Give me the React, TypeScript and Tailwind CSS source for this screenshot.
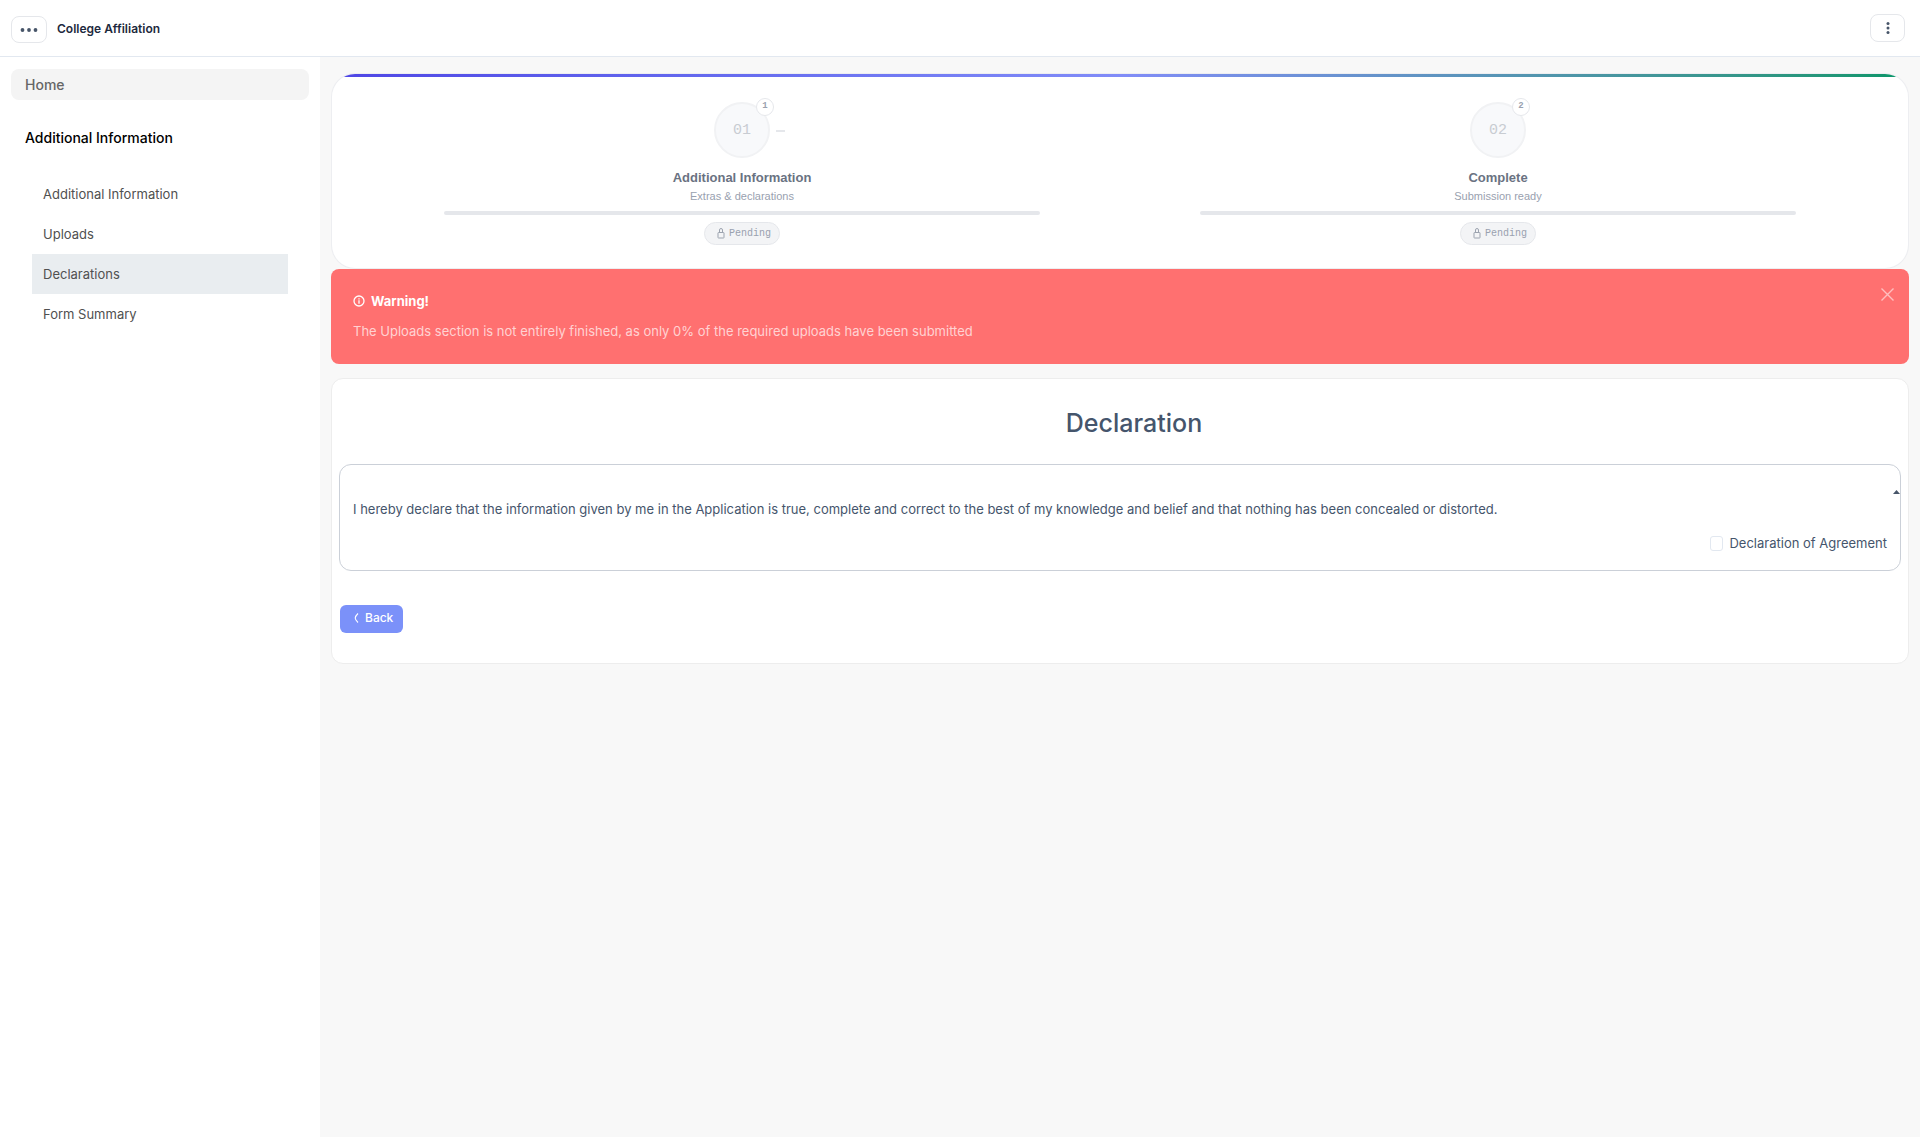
import type { ReactNode } from "react";

const navItems = [
  { label: "Additional Information", active: false },
  { label: "Uploads", active: false },
  { label: "Declarations", active: true },
  { label: "Form Summary", active: false },
];

const steps = [
  { number: 1, title: "Additional Information", subtitle: "Extras & declarations", status: "Pending" },
  { number: 2, title: "Complete", subtitle: "Submission ready", status: "Pending" },
];

function Header() {
  return (
    <header className="flex h-[57px] shrink-0 items-center border-b border-slate-200 bg-white pl-[11px] pr-[15px]">
      <button
        type="button"
        aria-label="Toggle menu"
        className="mt-[3px] flex h-[27px] w-9 items-center justify-center rounded-lg border border-gray-200"
      >
        <svg width="18" height="4" viewBox="0 0 18 4" fill="#475569">
          <circle cx="2.5" cy="2" r="1.9" />
          <circle cx="9" cy="2" r="1.9" />
          <circle cx="15.5" cy="2" r="1.9" />
        </svg>
      </button>
      <h1 className="ml-2.5 pt-px text-xs font-semibold text-slate-800">College Affiliation</h1>
      <button
        type="button"
        aria-label="More options"
        className="ml-auto flex h-7 w-[35px] items-center justify-center rounded-lg border border-gray-200"
      >
        <svg width="4" height="12" viewBox="0 0 4 12" fill="#475569">
          <circle cx="2" cy="1.6" r="1.5" />
          <circle cx="2" cy="6" r="1.5" />
          <circle cx="2" cy="10.4" r="1.5" />
        </svg>
      </button>
    </header>
  );
}

function Sidebar() {
  return (
    <aside className="w-80 shrink-0 bg-white px-[11px] pt-3">
      <a
        href="#home"
        className="flex h-[31px] items-center rounded-lg bg-[#f4f4f4] px-3.5 text-sm font-medium text-[#666666]"
      >
        Home
      </a>
      <h2 className="mt-7 px-3.5 text-sm font-medium text-black">Additional Information</h2>
      <nav className="mt-[26px] px-[21px]">
        {navItems.map((item) => (
          <a
            key={item.label}
            href="#section"
            className={`flex h-10 items-center px-[11px] pt-px text-[13px] text-[#505050] ${
              item.active ? "bg-[#e9edf0]" : ""
            }`}
          >
            {item.label}
          </a>
        ))}
      </nav>
    </aside>
  );
}

function LockIcon() {
  return (
    <svg width="8" height="11" viewBox="0 0 8 11" fill="none" stroke="#9ca3af" strokeWidth="1">
      <rect x="1" y="4.5" width="6" height="5.5" rx="0.5" />
      <path d="M2.5 4.5V2a1.5 1.5 0 0 1 3 0v2.5" />
    </svg>
  );
}

function Stepper() {
  return (
    <section className="overflow-hidden rounded-3xl border border-gray-200/70 bg-white">
      <div className="h-[3px] bg-linear-to-r from-[#4f46e5] via-[#818cf8] to-[#059669]" />
      <ol className="grid grid-cols-2 px-8 pt-[25px] pb-[23px]">
        {steps.map((step, i) => (
          <li key={step.number} className="flex flex-col items-center">
            <div className="relative flex size-14 items-center justify-center rounded-full border-2 border-[#f1f2f4] bg-[#f8f9fb] pt-[3px] font-['Liberation_Mono',monospace] text-[15px] text-[#c8ccd2]">
              0{step.number}
              <span className="absolute -top-1.5 -right-1.5 flex size-[18px] items-center justify-center rounded-full border border-gray-200 bg-white text-[9px] font-bold text-gray-400">
                {step.number}
              </span>
              {i < steps.length - 1 && (
                <span className="absolute top-1/2 left-full ml-2 h-0.5 w-[9px] bg-gray-200" />
              )}
            </div>
            <h3 className="mt-2.5 font-['Liberation_Sans',sans-serif] text-[13px] leading-5 font-bold text-gray-500">
              {step.title}
            </h3>
            <p className="font-['Liberation_Sans',sans-serif] text-[11px] leading-4 text-gray-400">{step.subtitle}</p>
            <div className="mt-[7px] h-1 w-full px-20">
              <div className="h-full rounded-full bg-gray-200" />
            </div>
            <span className="mt-[7px] flex h-[23px] items-center gap-1 rounded-full border border-gray-200 bg-gray-100 pr-2 pl-3 font-['Liberation_Mono',monospace] text-[10px] text-gray-400">
              <LockIcon />
              {step.status}
            </span>
          </li>
        ))}
      </ol>
    </section>
  );
}

function Alert({ title, children }: { title: string; children: ReactNode }) {
  return (
    <section role="alert" className="relative h-[95px] rounded-lg bg-[#ff7070] px-[22px] pt-[22px] text-[13px] text-white">
      <div className="flex items-center gap-1.5 leading-5 font-bold">
        <svg width="12" height="12" viewBox="0 0 12 12" fill="none" stroke="currentColor" strokeWidth="1.3">
          <circle cx="6" cy="6" r="5" />
          <path d="M6 5.3v3.4M6 3.2v1.2" />
        </svg>
        {title}
      </div>
      <p className="mt-2.5 leading-5 text-white/70">{children}</p>
      <button type="button" aria-label="Close" className="absolute top-[19px] right-[15px] text-white/55">
        <svg width="13" height="13" viewBox="0 0 13 13" fill="none" stroke="currentColor" strokeWidth="1.4">
          <path d="M.5.5l12 12M12.5.5l-12 12" />
        </svg>
      </button>
    </section>
  );
}

function Declaration() {
  return (
    <section className="mt-3.5 rounded-xl border border-[#ededed] bg-white px-[7px] pb-[30px]">
      <h2 className="mt-7 pl-7 text-center text-[25px] leading-8 font-medium text-slate-600">Declaration</h2>
      <div className="relative mt-[25px] rounded-xl border border-[#cbd0d8] px-[13px] pt-[34px] pb-[17px] text-[13px] text-slate-600">
        <svg className="absolute top-[25px] right-0" width="7" height="4" viewBox="0 0 7 4" fill="#475569">
          <path d="M0 4 3.5 0 7 4z" />
        </svg>
        <p className="leading-5">
          I hereby declare that the information given by me in the Application is true, complete and correct to the best
          of my knowledge and belief and that nothing has been concealed or distorted.
        </p>
        <label className="mt-3.5 flex items-center justify-end gap-1.5 leading-5">
          <input type="checkbox" className="h-[15px] w-[13px] appearance-none rounded-[3px] border border-slate-200" />
          Declaration of Agreement
        </label>
      </div>
      <button
        type="button"
        className="mt-[34px] ml-px flex h-7 items-center gap-1.5 rounded-md bg-[#7b91f9] pr-2.5 pb-0.5 pl-3.5 text-xs font-medium text-white"
      >
        <svg width="5" height="10" viewBox="0 0 5 10" fill="none" stroke="currentColor" strokeWidth="1.1">
          <path d="M4 .5C2 2.5 1.2 3.5 1.2 5S2 7.500 4 9.500" />
        </svg>
        Back
      </button>
    </section>
  );
}

export default function App() {
  return (
    <div className="flex min-h-screen flex-col bg-[#f8f8f8] font-['Inter',sans-serif]">
      <Header />
      <div className="flex grow">
        <Sidebar />
        <main className="min-w-0 grow px-[11px] pt-4">
          <Stepper />
          <Alert title="Warning!">
            The Uploads section is not entirely finished, as only 0% of the required uploads have been submitted
          </Alert>
          <Declaration />
        </main>
      </div>
    </div>
  );
}
